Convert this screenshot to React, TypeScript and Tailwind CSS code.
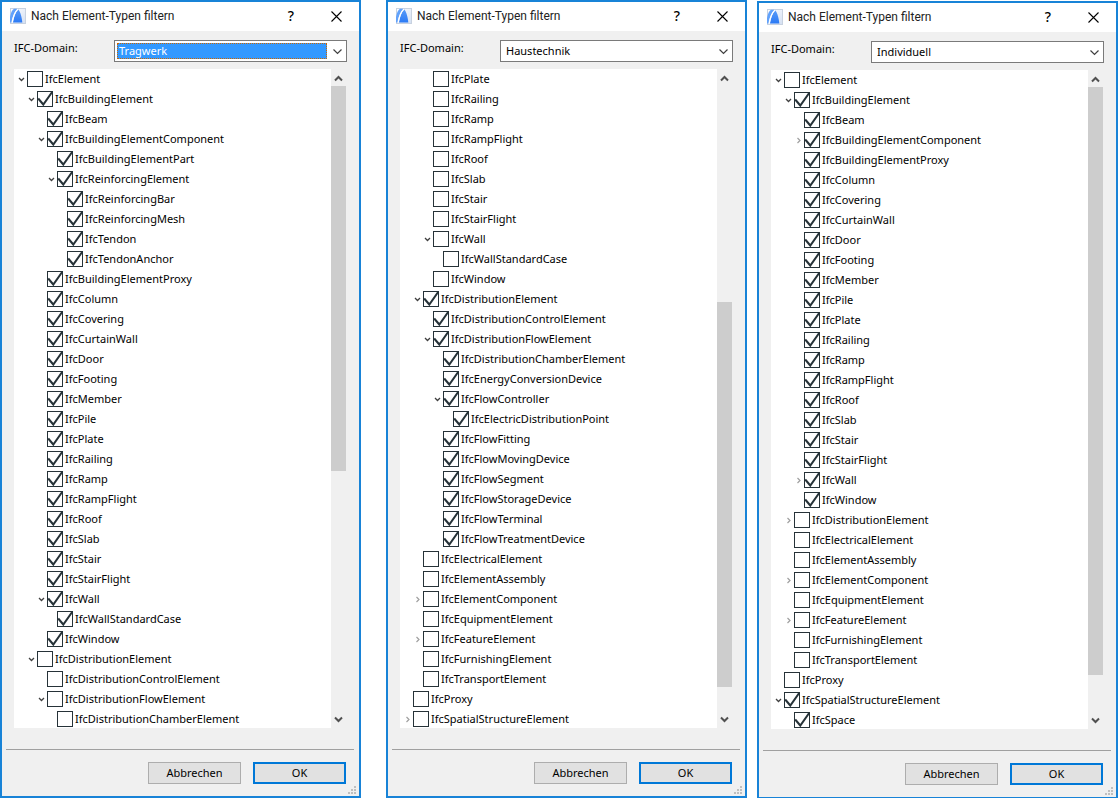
import { useId, useState } from 'react'

type Node = {
  name: string
  level: number
  checked?: boolean
  arrow?: 'open' | 'closed'
}

type DialogData = {
  domain: string
  focused?: boolean
  nodes: Node[]
  thumb: string
}

// "level|flags|name", flags: x = checked, v = expanded, > = collapsed
const parse = (lines: string): Node[] =>
  lines
    .trim()
    .split('\n')
    .map((line) => {
      const [level, flags, name] = line.trim().split('|')
      return {
        name,
        level: Number(level),
        checked: flags.includes('x'),
        arrow: flags.includes('v') ? 'open' : flags.includes('>') ? 'closed' : undefined,
      }
    })

const DOMAINS = ['Tragwerk', 'Haustechnik', 'Individuell']

const dialogs: DialogData[] = [
  {
    domain: 'Tragwerk',
    focused: true,
    thumb: 'h-[385px]',
    nodes: parse(`
      0|v|IfcElement
      1|xv|IfcBuildingElement
      2|x|IfcBeam
      2|xv|IfcBuildingElementComponent
      3|x|IfcBuildingElementPart
      3|xv|IfcReinforcingElement
      4|x|IfcReinforcingBar
      4|x|IfcReinforcingMesh
      4|x|IfcTendon
      4|x|IfcTendonAnchor
      2|x|IfcBuildingElementProxy
      2|x|IfcColumn
      2|x|IfcCovering
      2|x|IfcCurtainWall
      2|x|IfcDoor
      2|x|IfcFooting
      2|x|IfcMember
      2|x|IfcPile
      2|x|IfcPlate
      2|x|IfcRailing
      2|x|IfcRamp
      2|x|IfcRampFlight
      2|x|IfcRoof
      2|x|IfcSlab
      2|x|IfcStair
      2|x|IfcStairFlight
      2|xv|IfcWall
      3|x|IfcWallStandardCase
      2|x|IfcWindow
      1|v|IfcDistributionElement
      2||IfcDistributionControlElement
      2|v|IfcDistributionFlowElement
      3||IfcDistributionChamberElement
    `),
  },
  {
    domain: 'Haustechnik',
    thumb: 'mt-[216px] h-[385px]',
    nodes: parse(`
      2||IfcPlate
      2||IfcRailing
      2||IfcRamp
      2||IfcRampFlight
      2||IfcRoof
      2||IfcSlab
      2||IfcStair
      2||IfcStairFlight
      2|v|IfcWall
      3||IfcWallStandardCase
      2||IfcWindow
      1|xv|IfcDistributionElement
      2|x|IfcDistributionControlElement
      2|xv|IfcDistributionFlowElement
      3|x|IfcDistributionChamberElement
      3|x|IfcEnergyConversionDevice
      3|xv|IfcFlowController
      4|x|IfcElectricDistributionPoint
      3|x|IfcFlowFitting
      3|x|IfcFlowMovingDevice
      3|x|IfcFlowSegment
      3|x|IfcFlowStorageDevice
      3|x|IfcFlowTerminal
      3|x|IfcFlowTreatmentDevice
      1||IfcElectricalElement
      1||IfcElementAssembly
      1|>|IfcElementComponent
      1||IfcEquipmentElement
      1|>|IfcFeatureElement
      1||IfcFurnishingElement
      1||IfcTransportElement
      0||IfcProxy
      0|>|IfcSpatialStructureElement
    `),
  },
  {
    domain: 'Individuell',
    thumb: 'h-[588px]',
    nodes: parse(`
      0|v|IfcElement
      1|xv|IfcBuildingElement
      2|x|IfcBeam
      2|x>|IfcBuildingElementComponent
      2|x|IfcBuildingElementProxy
      2|x|IfcColumn
      2|x|IfcCovering
      2|x|IfcCurtainWall
      2|x|IfcDoor
      2|x|IfcFooting
      2|x|IfcMember
      2|x|IfcPile
      2|x|IfcPlate
      2|x|IfcRailing
      2|x|IfcRamp
      2|x|IfcRampFlight
      2|x|IfcRoof
      2|x|IfcSlab
      2|x|IfcStair
      2|x|IfcStairFlight
      2|x>|IfcWall
      2|x|IfcWindow
      1|>|IfcDistributionElement
      1||IfcElectricalElement
      1||IfcElementAssembly
      1|>|IfcElementComponent
      1||IfcEquipmentElement
      1|>|IfcFeatureElement
      1||IfcFurnishingElement
      1||IfcTransportElement
      0||IfcProxy
      0|xv|IfcSpatialStructureElement
      1|x|IfcSpace
    `),
  },
]

function Logo() {
  return (
    <svg width="16" height="16" viewBox="0 0 16 16" aria-hidden="true">
      <defs>
        <linearGradient id="logo-bg" x1="0" y1="0" x2="1" y2="1">
          <stop offset="0" stopColor="#ffffff" />
          <stop offset="1" stopColor="#d3dff2" />
        </linearGradient>
        <linearGradient id="logo-sail" x1="0" y1="0" x2="0" y2="1">
          <stop offset="0" stopColor="#5a9cf8" />
          <stop offset="1" stopColor="#2b7af5" />
        </linearGradient>
      </defs>
      <rect x="0.5" y="0.5" width="15" height="15" fill="url(#logo-bg)" stroke="#c8d2e0" />
      <path d="M0 14.500V9C0.800 5 2 2 4 0.800H8C5 3 2.500 8 1.500 14.500Z" fill="#62a2fb" />
      <path d="M3 14.500C4 8.500 5.500 4 8.200 1.200C10.300 3.500 11.800 9 12.300 14.500Z" fill="url(#logo-sail)" />
      <path d="M2.200 14.500C3.200 8.500 4.800 4 8 1" fill="none" stroke="#fff" strokeWidth="1.100" />
    </svg>
  )
}

function Arrow({ kind }: { kind: 'open' | 'closed' }) {
  return (
    <svg width="7" height="7" viewBox="0 0 7 7" fill="none" aria-hidden="true">
      {kind === 'open' ? (
        <path d="M1 2L3.500 4.500L6 2" stroke="#404040" strokeWidth="1.300" />
      ) : (
        <path d="M2.500 1L5 3.500L2.500 6" stroke="#a0a0a0" strokeWidth="1.200" />
      )}
    </svg>
  )
}

function TreeRow({ node }: { node: Node }) {
  const id = useId()
  const [checked, setChecked] = useState(!!node.checked)

  return (
    <li className="flex h-5 items-center pl-1" style={{ marginLeft: node.level * 10 }}>
      <span className="flex w-[9px] shrink-0">{node.arrow && <Arrow kind={node.arrow} />}</span>
      <span className="relative size-4 shrink-0">
        <input
          id={id}
          type="checkbox"
          checked={checked}
          onChange={(e) => setChecked(e.target.checked)}
          className="block size-4 appearance-none border border-[#263238] bg-white"
        />
        {checked && (
          <svg
            className="pointer-events-none absolute inset-0"
            width="16"
            height="16"
            viewBox="0 0 16 16"
            fill="none"
            aria-hidden="true"
          >
            <path d="M1.200 7.500L6.300 13.500L15.300 0.800" stroke="#263238" strokeWidth="2" />
          </svg>
        )}
      </span>
      <label htmlFor={id} className="pl-[2px] whitespace-nowrap">
        {node.name}
      </label>
    </li>
  )
}

function ScrollBar({ thumb }: { thumb: string }) {
  return (
    <div className="flex w-[15px] shrink-0 flex-col">
      <button aria-label="Nach oben" className="flex h-[17px] items-center justify-center pt-px">
        <svg width="9" height="7" viewBox="0 0 9 7" fill="none">
          <path d="M1 5.500L4.500 2L8 5.500" stroke="#505050" strokeWidth="2" />
        </svg>
      </button>
      <div className="flex-1">
        <div className={`bg-[#cdcdcd] ${thumb}`} />
      </div>
      <button aria-label="Nach unten" className="flex h-[17px] items-center justify-center">
        <svg width="9" height="7" viewBox="0 0 9 7" fill="none">
          <path d="M1 1.500L4.500 5L8 1.500" stroke="#505050" strokeWidth="2" />
        </svg>
      </button>
    </div>
  )
}

function Grip() {
  return (
    <svg className="absolute right-[3px] bottom-[2px]" width="8" height="8" fill="#bfbfbf" aria-hidden="true">
      <path d="M6 0h2v2h-2zM3 3h2v2h-2zM6 3h2v2h-2zM0 6h2v2h-2zM3 6h2v2h-2zM6 6h2v2h-2z" />
    </svg>
  )
}

function FilterDialog({ data, className = '' }: { data: DialogData; className?: string }) {
  const id = useId()
  const [domain, setDomain] = useState(data.domain)

  return (
    <section className={`relative min-w-0 flex-1 border-2 border-[#1883d7] bg-[#f0f0f0] ${className}`}>
      <header className="flex h-[29px] items-center bg-white pr-[17px] pb-px pl-2">
        <Logo />
        <h2 className="flex-1 pl-[5px] font-[Roboto,sans-serif] text-xs whitespace-nowrap text-[#222]">
          Nach Element-Typen filtern
        </h2>
        <button aria-label="Hilfe" className="w-4 text-sm font-medium">
          ?
        </button>
        <button aria-label="Schließen" className="ml-8">
          <svg width="11" height="11" viewBox="0 0 11 11" fill="none">
            <path d="M0.500 0.500L10.500 10.500M10.500 0.500L0.500 10.500" stroke="#000" strokeWidth="1.100" />
          </svg>
        </button>
      </header>

      <div className="flex items-start justify-between px-3 pt-[9px] pb-[7px]">
        <label htmlFor={id} className="leading-4">
          IFC-Domain:
        </label>
        <div className="relative flex h-[22px] w-[233px] border border-[#7a7a7a] bg-white p-[2px] pr-[19px]">
          <select
            id={id}
            value={domain}
            onChange={(e) => setDomain(e.target.value)}
            className={
              data.focused
                ? 'h-4 w-full appearance-none bg-[#3399ff] pl-[2px] leading-4 text-white outline-1 -outline-offset-1 outline-[#cc6600] outline-dotted'
                : 'h-4 w-full appearance-none bg-white pl-[3px] leading-4 outline-none'
            }
          >
            {DOMAINS.map((d) => (
              <option key={d}>{d}</option>
            ))}
          </select>
          <svg
            className="pointer-events-none absolute top-[8px] right-[4px]"
            width="9"
            height="6"
            viewBox="0 0 9 6"
            fill="none"
            aria-hidden="true"
          >
            <path d="M0.500 0.500L4.500 4.500L8.500 0.500" stroke="#404040" strokeWidth="1.200" />
          </svg>
        </div>
      </div>

      <div className="flex h-[659px] pr-[13px] pl-3">
        <ul className="flex-1 overflow-hidden bg-white">
          {data.nodes.map((node) => (
            <TreeRow key={node.name} node={node} />
          ))}
        </ul>
        <ScrollBar thumb={data.thumb} />
      </div>

      <hr className="mt-[21px] mr-[5px] ml-1 border-[#a0a0a0]" />

      <footer className="flex justify-end gap-3 py-3 pr-[13px]">
        <button className="h-[22px] w-[93px] border border-[#adadad] bg-[#e1e1e1]">Abbrechen</button>
        <button className="h-[22px] w-[93px] border-2 border-[#0078d7] bg-[#e1e1e1]">OK</button>
      </footer>
      <Grip />
    </section>
  )
}

export default function App() {
  return (
    <main className="flex items-start overflow-hidden bg-white pr-[2px] font-['Noto_Sans',sans-serif] text-[11px] text-black">
      <FilterDialog data={dialogs[0]} />
      <FilterDialog data={dialogs[1]} className="ml-[25px]" />
      <FilterDialog data={dialogs[2]} className="mt-px -mb-px ml-[10px]" />
    </main>
  )
}
